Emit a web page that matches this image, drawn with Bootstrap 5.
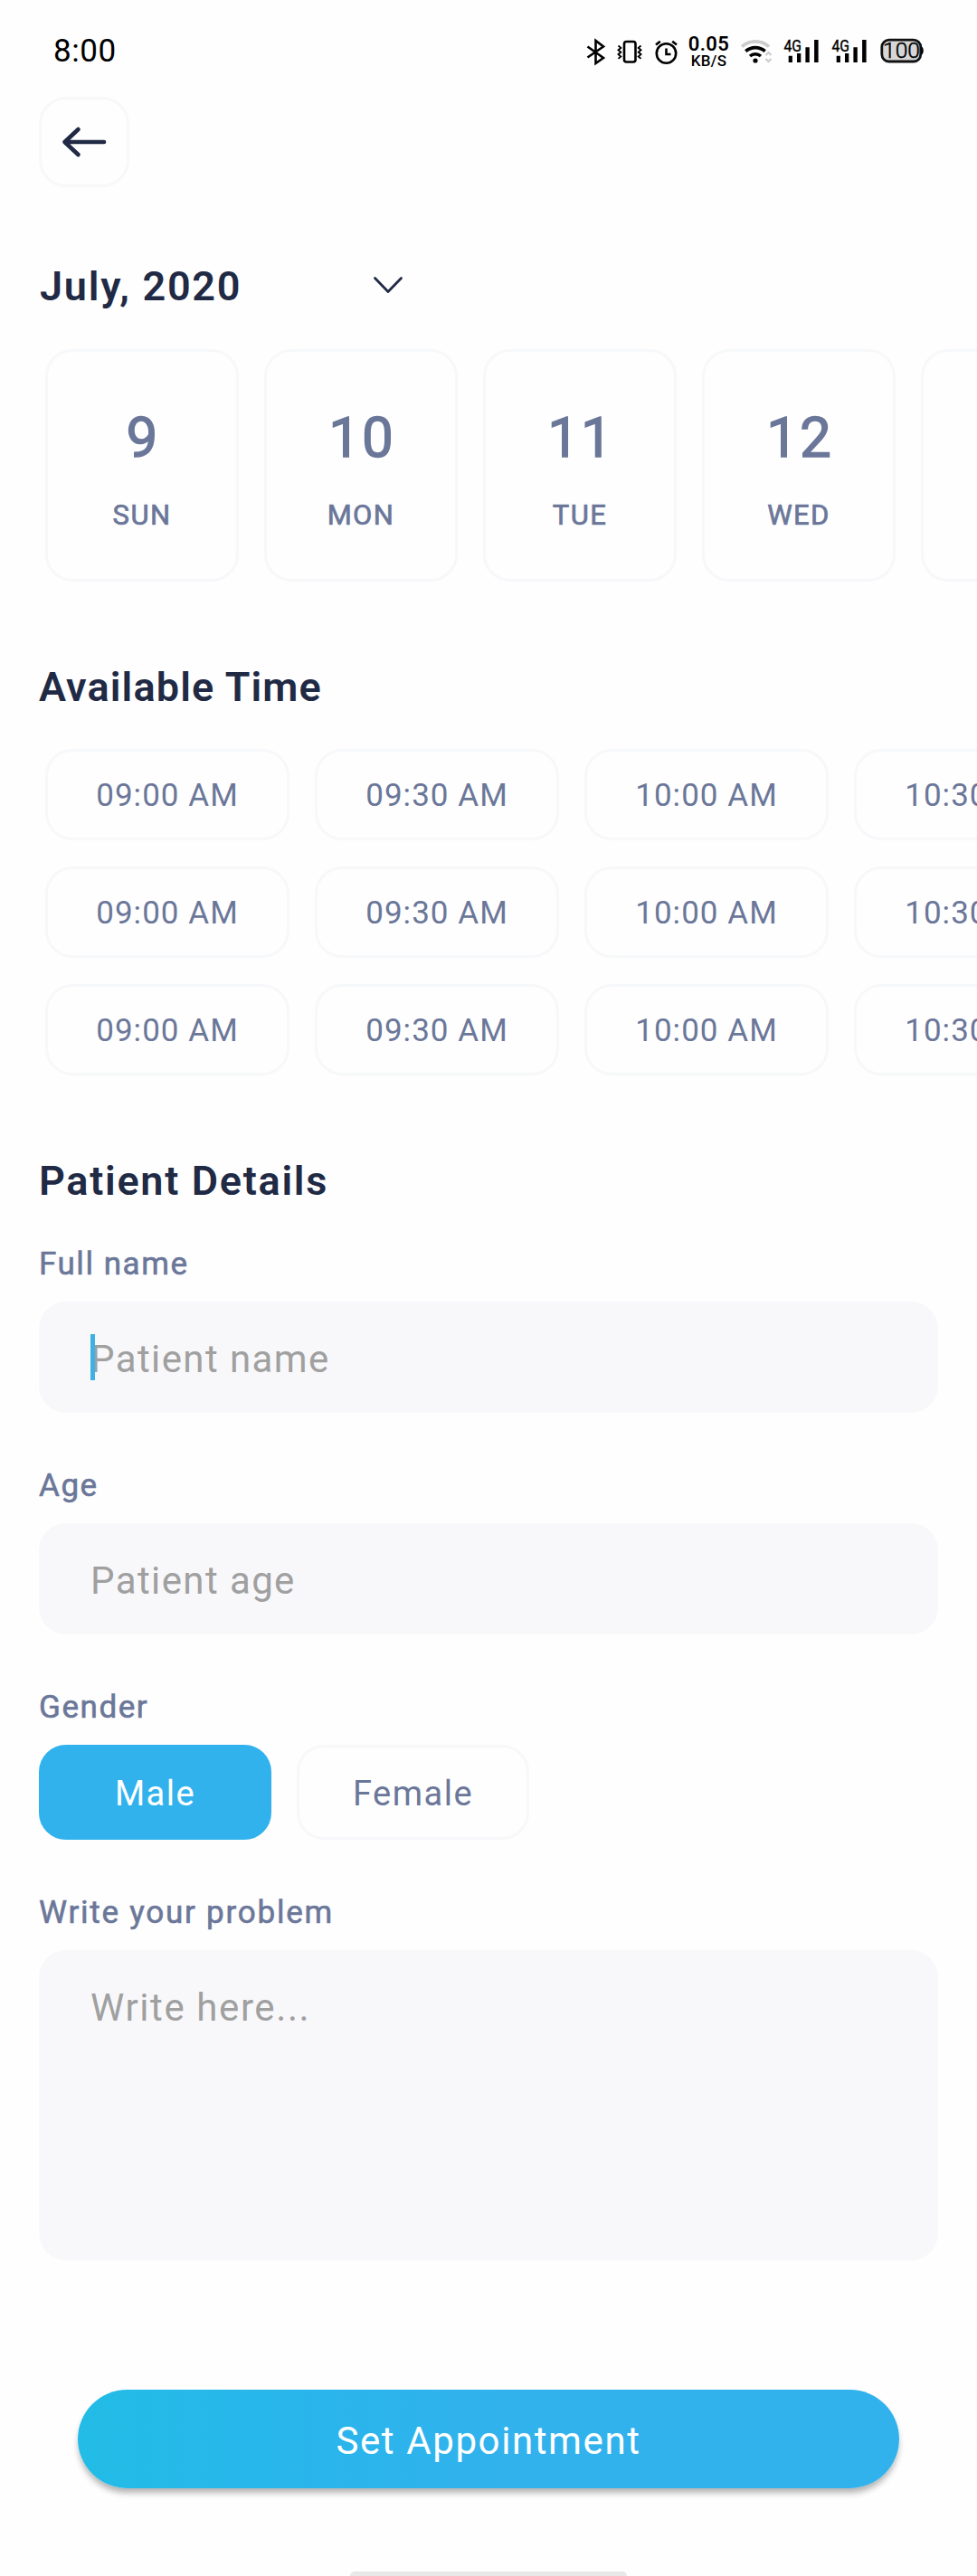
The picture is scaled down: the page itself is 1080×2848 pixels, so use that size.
<!DOCTYPE html>
<html lang="en">
<head>
<meta charset="utf-8">
<meta name="viewport" content="width=device-width, initial-scale=1">
<title>Set Appointment</title>
<link href="https://cdn.jsdelivr.net/npm/bootstrap@5.3.0/dist/css/bootstrap.min.css" rel="stylesheet">
<style>
  :root { --ink: #212a45; --slate: #6b7799; --line: #f7f8fa; --sky: #31b2ed; }
  body { font-family: Roboto, "Liberation Sans", sans-serif; background: #fefefe; color: var(--slate); width: 1080px; overflow-x: hidden; }
  .screen { height: 2848px; }
  .status { height: 107px; padding: 7px 56px 0 59px; color: #000; }
  .clock { font-size: 35px; letter-spacing: .6px; line-height: 40px; }
  .speed { width: 59px; font-weight: 600; }
  .speed-value { font-size: 22px; line-height: 20px; letter-spacing: .4px; }
  .speed-unit { font-size: 17px; line-height: 17px; letter-spacing: .3px; font-weight: 500; }
  .page-body { padding: 0 43px; }
  .outlined { border: 3px solid var(--line); border-radius: 30px; background: transparent; color: var(--slate); }
  .back-btn { width: 100px; height: 100px; }
  .title-text { font-size: 45px; font-weight: 600; line-height: 60px; color: var(--ink); margin: 0; padding-top: 1px; height: 60px; letter-spacing: 1.15px; }
  .title-text.month { letter-spacing: 1.75px; padding-left: 1px; }
  .title-text.details { letter-spacing: 1.7px; }
  .month-row { margin-top: 79px; margin-bottom: 40px; width: 403px; }
  .title-gap { margin-top: 86px; }
  .strip { margin: 0 -43px 0 7px; overflow: hidden; gap: 28px; }
  .day-card { width: 214px; height: 257px; padding-top: 60px; }
  .day-num { font-size: 62px; line-height: 70px; letter-spacing: 2px; padding-left: 2px; -webkit-text-stroke: 1.4px currentColor; }
  .day-name { font-size: 31px; line-height: 40px; margin-top: 31px; letter-spacing: 1.4px; -webkit-text-stroke: .7px currentColor; }
  .slots { gap: 29px; margin-top: 39px; }
  .slot { width: 270px; height: 101px; font-size: 35px; letter-spacing: 1.05px; padding-top: 9px; }
  .field-label { font-size: 35px; line-height: 44px; height: 44px; padding-top: 1px; letter-spacing: 1.55px; margin: 58px 0 20px; display: block; -webkit-text-stroke: .6px currentColor; }
  .field-label.first { margin-top: 40px; }
  .field-label.wide { letter-spacing: 1.75px; }
  .form-control.field, .form-control.field:focus { background: #f8f8fb; border: 0; border-radius: 30px; padding: 3px 57px 0; height: 123px; font-size: 42px; letter-spacing: 1.4px; box-shadow: none; resize: none; overflow: hidden; }
  .form-control.field::placeholder { color: #a0a0a0; }
  .form-control.field.problem { height: 343px; padding-top: 39px; line-height: 50px; letter-spacing: 1.6px; }
  .caret { left: 57px; top: 36px; width: 5px; height: 51px; background: #3eb0e4; }
  .gender-row { gap: 28px; }
  .gender { width: 257px; height: 105px; font-size: 38px; letter-spacing: 1.5px; padding-top: 9px; }
  .gender.chosen { background: var(--sky); color: #fff; border-color: var(--sky); }
  .submit { height: 109px; margin: 143px 43px 0; color: #fff; border: 0; font-size: 42px; letter-spacing: 1.6px; padding-top: 9px; background: linear-gradient(90deg, #22bce6 0%, #2ab5ec 30%, #31b2ed 52%); box-shadow: 0 6px 7px -1px rgba(0,0,0,.3); }
  .home-bar { width: 306px; height: 5px; background: #e8e8e8; border-radius: 5px 5px 0 0; }
</style>
</head>
<body>
<div class="screen d-flex flex-column">
  <header class="status d-flex align-items-center">
    <span class="clock me-auto">8:00</span>
    <svg width="34" height="34" viewBox="646 40 34 34" fill="none" stroke="#000" stroke-width="2.6"><path d="M649.5 51.5 667 64l-8.5 6V45l8.500 6.500-17.500 12"/></svg>
    <svg width="34" height="34" viewBox="680 40 34 34" fill="none" stroke="#000"><rect x="690" y="46" width="12.500" height="22.500" rx="2.500" stroke-width="2.600"/><path stroke-width="1.900" d="m683.500 50.500 2.800 2.400-2.800 2.400 2.800 2.400-2.800 2.400 2.800 2.400-2.800 2.400M708.500 50.500l-2.800 2.400 2.800 2.400-2.800 2.400 2.800 2.400-2.800 2.400 2.800 2.400"/></svg>
    <svg width="42" height="34" viewBox="714 40 42 34" fill="none" stroke="#000" stroke-width="2.6"><circle cx="736.500" cy="59" r="10.700"/><path d="M736.500 53.500V60h5M725 49.500l4.800-3.800M748 49.500l-4.800-3.800"/></svg>
    <div class="speed d-flex flex-column text-center pe-2 ps-1"><span class="speed-value">0.05</span><span class="speed-unit">KB/S</span></div>
    <svg width="47" height="34" viewBox="815 40 47 34" fill="none"><path stroke="#ccc" stroke-width="3.600" d="M820 51.500c8.500-7.500 21.500-7.500 30 0"/><path stroke="#000" stroke-width="3.600" d="M824.300 56.700c6-5.400 15.400-5.400 21.400 0M829 62c3.500-3 8.500-3 12 0"/><circle cx="835" cy="67" r="2.600" fill="#000"/><path stroke="#ccc" stroke-width="2.200" d="m846.500 61 3-3 3 3M846.500 65l3 3 3-3"/></svg>
    <svg width="52" height="34" viewBox="862 40 52 34"><text x="866.500" y="56.800" font-size="17.800" textLength="19.500" lengthAdjust="spacingAndGlyphs" stroke="#000" stroke-width=".4">4G</text><path d="M871.700 61.700h4.200V69h-4.200zM881 59h4.300v10H881zM890.400 52.300h4.400V69h-4.400zM900.100 44h4.500v25h-4.500z"/></svg>
    <svg width="53" height="34" viewBox="861 40 53 34"><text x="866.500" y="56.800" font-size="17.800" textLength="19.500" lengthAdjust="spacingAndGlyphs" stroke="#000" stroke-width=".4">4G</text><path d="M871.700 61.700h4.200V69h-4.200zM881 59h4.300v10H881zM890.400 52.300h4.400V69h-4.400zM900.100 44h4.500v25h-4.500z"/></svg>
    <svg width="57" height="34" viewBox="967 40 57 34"><rect x="974.800" y="44.200" width="43" height="23.800" rx="8" fill="#d6d6d6" stroke="#111" stroke-width="2.800"/><path d="M1018.500 51.500c3 .5 3 8.500 0 9z"/><text x="976" y="64.400" font-size="24" textLength="41" lengthAdjust="spacingAndGlyphs" font-weight="300" stroke="#000" stroke-width=".5">100</text></svg>
  </header>

  <main class="page-body">
    <button type="button" class="btn outlined back-btn p-0 d-flex align-items-center justify-content-center" aria-label="Back">
      <svg width="52" height="40" viewBox="67 137 52 40" fill="none" stroke="#212a45" stroke-width="4.600" stroke-linecap="round" stroke-linejoin="round"><path d="M115 157H71.500M86.500 143 71.500 157l15 14"/></svg>
    </button>

    <div class="month-row d-flex align-items-center justify-content-between">
      <h1 class="title-text month">July, 2020</h1>
      <svg width="34" height="22" viewBox="0 0 34 22" fill="none" stroke="#212a45" stroke-width="2.800" stroke-linecap="round" stroke-linejoin="round"><path d="m2.500 2.500 14.500 15 14.500-15"/></svg>
    </div>

    <div class="strip d-flex">
      <div class="outlined day-card flex-shrink-0 text-center"><div class="day-num">9</div><div class="day-name">SUN</div></div>
      <div class="outlined day-card flex-shrink-0 text-center"><div class="day-num">10</div><div class="day-name">MON</div></div>
      <div class="outlined day-card flex-shrink-0 text-center"><div class="day-num">11</div><div class="day-name">TUE</div></div>
      <div class="outlined day-card flex-shrink-0 text-center"><div class="day-num">12</div><div class="day-name">WED</div></div>
      <div class="outlined day-card flex-shrink-0"></div>
    </div>

    <h2 class="title-text title-gap">Available Time</h2>
    <div class="slots d-flex flex-column">
      <div class="strip d-flex">
        <button class="btn outlined slot flex-shrink-0">09:00 AM</button><button class="btn outlined slot flex-shrink-0">09:30 AM</button><button class="btn outlined slot flex-shrink-0">10:00 AM</button><button class="btn outlined slot flex-shrink-0">10:30 AM</button>
      </div>
      <div class="strip d-flex">
        <button class="btn outlined slot flex-shrink-0">09:00 AM</button><button class="btn outlined slot flex-shrink-0">09:30 AM</button><button class="btn outlined slot flex-shrink-0">10:00 AM</button><button class="btn outlined slot flex-shrink-0">10:30 AM</button>
      </div>
      <div class="strip d-flex">
        <button class="btn outlined slot flex-shrink-0">09:00 AM</button><button class="btn outlined slot flex-shrink-0">09:30 AM</button><button class="btn outlined slot flex-shrink-0">10:00 AM</button><button class="btn outlined slot flex-shrink-0">10:30 AM</button>
      </div>
    </div>

    <h2 class="title-text title-gap details">Patient Details</h2>
    <label class="field-label first" for="fullName">Full name</label>
    <div class="position-relative">
      <input id="fullName" class="form-control field" placeholder="Patient name">
      <span class="caret position-absolute"></span>
    </div>
    <label class="field-label" for="age">Age</label>
    <input id="age" class="form-control field" placeholder="Patient age">
    <span class="field-label">Gender</span>
    <div class="d-flex gender-row">
      <button type="button" class="btn outlined gender chosen">Male</button>
      <button type="button" class="btn outlined gender">Female</button>
    </div>
    <label class="field-label wide" for="problem">Write your problem</label>
    <textarea id="problem" class="form-control field problem" placeholder="Write here..."></textarea>
    <div class="d-grid">
      <button type="button" class="btn rounded-pill submit">Set Appointment</button>
    </div>
  </main>
  <div class="home-bar mt-auto mx-auto"></div>
</div>
<script src="https://cdn.jsdelivr.net/npm/bootstrap@5.3.0/dist/js/bootstrap.bundle.min.js"></script>
</body>
</html>
